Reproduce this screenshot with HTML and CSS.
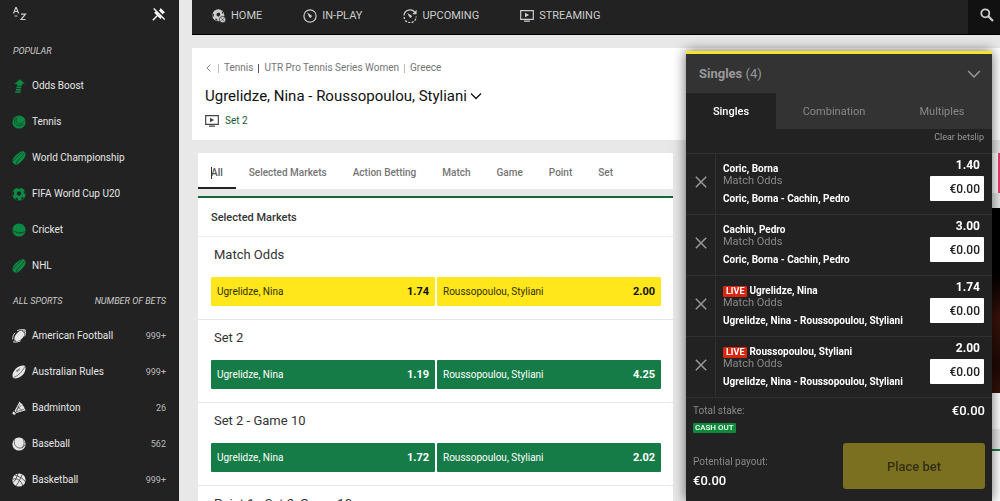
FILE: index.html
```
<!DOCTYPE html>
<html lang="en">
<head>
<meta charset="utf-8">
<title>Ugrelidze, Nina - Roussopoulou, Styliani</title>
<link rel="stylesheet" href="styles.css">
</head>
<body>
<svg class="defs" aria-hidden="true">
  <symbol id="tv" viewBox="0 0 14 14"><path d="M.7 1.7h12.6v8.6H.7z" fill="none" stroke="currentColor" stroke-width="1.2"/><path d="M5 3.8v4.4L9.2 6zM4 11.6h6v1.2H4z" fill="currentColor"/></symbol>
  <symbol id="chev" viewBox="0 0 12 12"><path d="M1 3.500 6 8.500l5-5" fill="none" stroke="currentColor" stroke-width="1.300"/></symbol>
  <symbol id="cross" viewBox="0 0 12 12"><path d="m.8.8 10.400 10.400M11.200.8.8 11.200" fill="none" stroke="currentColor" stroke-width="1.500"/></symbol>
  <symbol id="puck" viewBox="0 0 14 14"><path d="M8 1.200C9.500.3 11 0 12.200.8c1.600 1 1.700 2.400 1.200 4-.5 1.500-1.500 3-3.200 4.800-1.700 1.700-2.800 3-4.200 3.700-1.500.7-3 .5-4.200-.5C.6 11.700.3 10.300.7 9c.4-1.500 1.300-3 3-4.700C5.300 2.700 6.600 2 8 1.200z" fill="currentColor"/><path d="M12.800 1.600C11 3.500 10.500 5 8.500 6.800c-2 1.700-3.500 3.200-4.300 6.200M9.500 1.500C8 3.500 6.500 4 5 5.600c-1.300 1.400-2.500 2.700-3.500 4.400" fill="none" stroke="#222" stroke-width=".6"/></symbol>
</svg>
<div class="layout">
  <aside class="sidebar">
    <div class="tools">
      <button class="plain" aria-label="Sort A to Z"><svg class="az" viewBox="0 0 16 16"><path d="m1.500 7.500 2.300-6h.5l2.300 6M2.300 5.500h3.500M2.500 10h3M9 8.200h4.500L9 13.500h4.700" fill="none" stroke="#ccc" stroke-width="1.200"/></svg></button>
      <button class="plain" aria-label="Unpin menu"><svg class="pin" viewBox="0 0 14 14"><path d="m8.500 1 4.600 4.500-1.300.5-2.300 2.700.3 2L8.500 12 2.200 5.800l1.200-1.200 2 .2L8 2.400z" fill="#fff"/><path d="M5.200 8.800.8 13.300" stroke="#fff" stroke-width="1.300"/><path d="m2.700.8 10.500 11.400" stroke="#222" stroke-width="2.800"/><path d="m1.700 1.500 11 11" stroke="#fff" stroke-width="1.200"/></svg></button>
    </div>
    <h2 class="side-title first"><span>POPULAR</span></h2>
    <ul class="side-list green">
      <li><a href="#"><svg viewBox="0 0 14 14"><path d="M8 .3 13 5l-2.800-.3-.3 2H4.800l.4-2L2 5.200zM4.600 7.500h5l-.3 1.800H4.200zM4 10h5.200l-.2 1.500H3.700zM3.500 12.200h5.300l-.2 1.500H3z" fill="currentColor"/></svg><span>Odds Boost</span></a></li>
      <li><a href="#"><svg viewBox="0 0 14 14"><circle cx="7" cy="7" r="6.600" fill="currentColor"/><path d="M6 1.500C3.700 3.500 3.500 6.500 5.600 8.300c2.300 1.500 5 .4 7-2.600M3.500 2.500C1.800 5.500 2.300 8.500 4.500 10c2.200 1.300 5 1 7-.7" fill="none" stroke="#222" stroke-width=".6"/></svg><span>Tennis</span></a></li>
      <li><a href="#"><svg><use href="#puck"/></svg><span>World Championship</span></a></li>
      <li><a href="#"><svg viewBox="0 0 14 14"><circle cx="7" cy="7" r="6.600" fill="currentColor"/><path d="m5.500 4.700 3-.2.900 2.600-2.300 1.900-2.400-1.800zM4.500 1l2.500.9L9.500 1 8.600.3H5.500zM.5 4.500l1.600.7L2 7.900l-1.500.4zM3.700 10.700l2.200.7.3 1.900-2.500-.8zM9.500 10.400l2.200-.5-.7 2-1.700.8zM11.700 4l1.100.2.500 2.800-1.500-.8z" fill="#222"/></svg><span>FIFA World Cup U20</span></a></li>
      <li><a href="#"><svg viewBox="0 0 14 14"><circle cx="7" cy="7" r="6.600" fill="currentColor"/><path d="M.5 7.200c3.500 2.500 8 3.100 12.800 1.400" fill="none" stroke="#222" stroke-width=".6"/><path d="M.8 8.700c3.500 2 7.500 2.500 12 1.300" fill="none" stroke="#222" stroke-width=".4" stroke-dasharray="1 .8"/></svg><span>Cricket</span></a></li>
      <li><a href="#"><svg><use href="#puck"/></svg><span>NHL</span></a></li>
    </ul>
    <h2 class="side-title"><span>ALL SPORTS</span><span>NUMBER OF BETS</span></h2>
    <ul class="side-list">
      <li><a href="#"><svg viewBox="0 0 14 14"><path d="M12.600 1.400c.6 4-.8 7-3.600 9-2 1.500-4 2.200-6.500 2-.8-3.500.5-6.500 3-8.700 2-1.700 4.300-2.500 7.100-2.300z" fill="currentColor"/><path d="M3 3.800C1.300 5.500.5 8 .8 10.500M5 1.900C7.200.6 10 .3 13.200.8c.5 2.500.3 4.500-.5 6.500M1 12.900c3 .5 5.500 0 7.700-1.100" fill="none" stroke="currentColor" stroke-width=".9"/><path d="M2.500 10.500c.2.900.6 1.500 1.500 1.900M10 1.600c1.200.5 2 1.400 2.500 2.600" fill="none" stroke="#222" stroke-width=".8"/></svg><span>American Football</span><small>999+</small></a></li>
      <li><a href="#"><svg viewBox="0 0 14 14"><path d="M13 .9c1.500 3.500-.5 7.600-3.600 10.200-2.600 2-6.300 3-8.400 1.900C-.4 9.800 1.300 6 4.300 3.300 7 1 10.500 0 13 .9z" fill="currentColor"/><path d="m4.300 6.500 3.800-3M4.600 5.200l1.200 1.500M6 4.100l1.200 1.500M1.500 12.500C5 11.500 10.500 7 12.700 1.500" fill="none" stroke="#222" stroke-width=".6"/></svg><span>Australian Rules</span><small>999+</small></a></li>
      <li><a href="#"><svg viewBox="0 0 14 14"><path d="m7.500.5 1.300 1.800 1.500.8.6 2 1.200.7.300 1.800 1.400 1.700-9.400 2.600L2.500 10zM1.700 10.400l2.200 2.300c-.6 1.200-2.300 1.200-3.100.3-.8-.8-.3-2.200.9-2.600z" fill="currentColor"/><path d="m7.700 2.800-3.500 8L12 8.200M4 9.500l5.500-5.200M5.200 5.500l5 4" fill="none" stroke="#222" stroke-width=".5"/></svg><span>Badminton</span><small>26</small></a></li>
      <li><a href="#"><svg viewBox="0 0 14 14"><circle cx="7" cy="7" r="6.600" fill="currentColor"/><path d="M2.800 1.800C1.500 5.500 2.500 9.800 7 11c3 .5 5-1 6-3.500M11.200 2c1.500 3 1.200 6-1.200 8.500" fill="none" stroke="#222" stroke-width=".6"/></svg><span>Baseball</span><small>562</small></a></li>
      <li><a href="#"><svg viewBox="0 0 14 14"><circle cx="7" cy="7" r="6.600" fill="currentColor"/><path d="M.5 6.200C5 4.800 9 7 10.700 12.800M2.500 2C7 3.500 11 5 13.500 9M6 .3C5 4 3.500 8 .8 9.500M10.500 1.200C8.500 5 7 9 3.800 13.200" fill="none" stroke="#222" stroke-width=".7"/></svg><span>Basketball</span><small>999+</small></a></li>
    </ul>
  </aside>

  <div class="page">
    <nav class="topnav">
      <a href="#"><svg viewBox="0 0 14 14"><circle cx="6.300" cy="6.300" r="6" fill="currentColor"/><path d="m5 4 2.600-.2.800 2.300-2 1.600-2-1.500zM.5 4.500l1.400.6-.2 2.200-1.200.5zM3.500 9.500l1.700.7.2 1.600-2-.8zM9.800 2l1.200 1.400.4 1.500-1.400-.6z" fill="#222"/><circle cx="10.600" cy="10.600" r="3.200" fill="currentColor" stroke="#222" stroke-width=".7"/><path d="M9 12.300 12.300 9M9.200 9.200l2.800 2.800" stroke="#222" stroke-width=".5"/></svg>HOME</a>
      <a href="#"><svg viewBox="0 0 14 14"><circle cx="7" cy="7" r="6.100" fill="none" stroke="currentColor" stroke-width="1.200"/><path d="m4 3.500 4.300 2.700a1.400 1.400 0 1 1-2 2z" fill="currentColor"/></svg>IN-PLAY</a>
      <a href="#"><svg viewBox="0 0 14 14"><path d="M12.200 4A6 6 0 0 0 1 6.500" fill="none" stroke="currentColor" stroke-width="1.300"/><path d="M1.100 8a6 6 0 0 0 12-.5" fill="none" stroke="currentColor" stroke-width="1.300" stroke-dasharray="2.200 1.300"/><path d="M13.600.8v4.400H9.300zM4.200 4l4 2.300a1.300 1.300 0 1 1-1.800 1.800z" fill="currentColor"/></svg>UPCOMING</a>
      <a href="#"><svg><use href="#tv"/></svg>STREAMING</a>
      <button class="search" aria-label="Search"><svg viewBox="0 0 14 14"><circle cx="5.300" cy="5.300" r="4" fill="none" stroke="currentColor" stroke-width="1.800"/><path d="m8.300 8.300 4.700 4.700" stroke="currentColor" stroke-width="2.200"/></svg></button>
    </nav>

    <header class="event">
      <div class="crumbs">
        <a class="back" href="#" aria-label="Back"><svg viewBox="0 0 8 12"><path d="M5.500 2.500 2 6l3.500 3.500" fill="none" stroke="currentColor"/></svg></a>
        <i></i><a href="#">Tennis</a><i class="dark"></i><a href="#">UTR Pro Tennis Series Women</a><i></i><a href="#">Greece</a>
      </div>
      <h1>Ugrelidze, Nina - Roussopoulou, Styliani <svg><use href="#chev"/></svg></h1>
      <div class="status"><svg><use href="#tv"/></svg><span>Set 2</span></div>
    </header>

    <div class="columns">
      <main class="markets">
        <nav class="tabs">
          <a class="on" href="#">All</a><a href="#">Selected Markets</a><a href="#">Action Betting</a><a href="#">Match</a><a href="#">Game</a><a href="#">Point</a><a href="#">Set</a>
        </nav>
        <section class="panel">
          <h2>Selected Markets</h2>
          <div class="market">
            <h3>Match Odds</h3>
            <div class="odds picked"><button><span>Ugrelidze, Nina</span><b>1.74</b></button><button><span>Roussopoulou, Styliani</span><b>2.00</b></button></div>
          </div>
          <div class="market">
            <h3>Set 2</h3>
            <div class="odds"><button><span>Ugrelidze, Nina</span><b>1.19</b></button><button><span>Roussopoulou, Styliani</span><b>4.25</b></button></div>
          </div>
          <div class="market">
            <h3>Set 2 - Game 10</h3>
            <div class="odds"><button><span>Ugrelidze, Nina</span><b>1.72</b></button><button><span>Roussopoulou, Styliani</span><b>2.02</b></button></div>
          </div>
          <div class="market">
            <h3>Point 1 - Set 2, Game 10</h3>
          </div>
        </section>
      </main>
      <div class="extras">
        <div class="promo-tabs"></div>
        <div class="banner"></div>
        <div class="blank"></div>
        <div class="side-panel"></div>
      </div>
    </div>
  </div>
</div>

<section class="betslip">
  <header><h2>Singles <span>(4)</span></h2><button class="plain" aria-label="Collapse"><svg><use href="#chev"/></svg></button></header>
  <div class="modes"><button class="on">Singles</button><button>Combination</button><button>Multiples</button></div>
  <div class="clear"><button class="plain">Clear betslip</button></div>
  <ul class="bets">
    <li><button class="plain remove" aria-label="Remove"><svg><use href="#cross"/></svg></button><div class="bet"><strong>Coric, Borna</strong><p>Match Odds</p><strong class="match">Coric, Borna - Cachin, Pedro</strong></div><div class="stake"><b>1.40</b><input aria-label="Stake" value="€0.00"></div></li>
    <li><button class="plain remove" aria-label="Remove"><svg><use href="#cross"/></svg></button><div class="bet"><strong>Cachin, Pedro</strong><p>Match Odds</p><strong class="match">Coric, Borna - Cachin, Pedro</strong></div><div class="stake"><b>3.00</b><input aria-label="Stake" value="€0.00"></div></li>
    <li><button class="plain remove" aria-label="Remove"><svg><use href="#cross"/></svg></button><div class="bet"><strong><em>LIVE</em>Ugrelidze, Nina</strong><p>Match Odds</p><strong class="match">Ugrelidze, Nina - Roussopoulou, Styliani</strong></div><div class="stake"><b>1.74</b><input aria-label="Stake" value="€0.00"></div></li>
    <li><button class="plain remove" aria-label="Remove"><svg><use href="#cross"/></svg></button><div class="bet"><strong><em>LIVE</em>Roussopoulou, Styliani</strong><p>Match Odds</p><strong class="match">Ugrelidze, Nina - Roussopoulou, Styliani</strong></div><div class="stake"><b>2.00</b><input aria-label="Stake" value="€0.00"></div></li>
  </ul>
  <footer>
    <div class="total"><span>Total stake:</span><b>€0.00</b></div>
    <span class="cash">CASH OUT</span>
    <div class="payout"><div><span>Potential payout:</span><b>€0.00</b></div><button>Place bet</button></div>
  </footer>
</section>
</body>
</html>
```
FILE: styles.css
```
* { box-sizing: border-box; }
body { margin: 0; background: #e8e8e8; color: #222; font: 10px/14px Roboto, sans-serif; overflow: hidden; }
h1, h2, h3, p, ul { margin: 0; padding: 0; font-weight: 400; }
ul { list-style: none; }
a { color: inherit; text-decoration: none; }
button, input { font-family: inherit; border: 0; margin: 0; }
svg { display: block; flex: none; width: 14px; height: 14px; }
.defs { position: absolute; width: 0; height: 0; }
.plain { background: none; padding: 0; color: inherit; }

.layout { display: flex; height: 100vh; overflow: hidden; }
.sidebar { flex: none; width: 179px; padding: 0 13px 0 12px; background: #222; color: #e6e6e6; }
.tools { display: flex; justify-content: space-between; align-items: center; height: 28px; margin-bottom: 5px; }
.tools .az { width: 16px; height: 16px; }
.side-title { display: flex; justify-content: space-between; align-items: center; height: 34px; padding-left: 1px; font-size: 9px; font-style: italic; color: #ccc; }
.side-title.first { height: 35px; }
.side-list a { display: flex; align-items: center; gap: 6px; height: 36px; font-size: 10px; }
.side-list small { margin-left: auto; font-size: 9px; color: #bbb; }
.side-list.green svg { color: #0c8a43; }

.page { flex: 1; min-width: 0; padding-left: 13px; }
.topnav { display: flex; align-items: center; height: 35px; padding-left: 20px; gap: 41px; background: #222; border-bottom: 1px solid #000; color: #ccc; font-size: 11px; }
.topnav a { display: flex; align-items: center; gap: 5px; margin-top: -3px; }
.search { display: flex; align-items: center; align-self: stretch; width: 32px; margin-left: auto; padding: 0 0 4px 12px; background: #111; color: #ccc; }

.event { height: 92px; margin-top: 13px; padding: 13px; background: #fff; }
.crumbs { display: flex; align-items: center; gap: 5px; color: #757575; }
.crumbs i { width: 1px; height: 9px; background: #bbb; }
.crumbs .dark { background: #555; }
.crumbs .back svg { width: 8px; height: 12px; color: #888; }
.event h1 { display: flex; align-items: center; gap: 3px; margin-top: 11px; color: #111; font-size: 15px; line-height: 20px; }
.event h1 svg { width: 12px; height: 12px; }
.status { display: flex; align-items: center; gap: 6px; margin-top: 8px; color: #145c36; }
.status svg { color: #444; }

.columns { display: flex; gap: 16px; padding-left: 6px; margin-top: 13px; }
.markets { flex: none; width: 475px; }
.tabs { display: flex; height: 36px; background: #fff; color: #757575; font-weight: 500; }
.tabs a { display: flex; align-items: center; padding: 6px 13px 0; border-bottom: 2px solid transparent; }
.tabs .on { position: relative; border-color: #222; color: #555; }
.tabs .on::before { content: ""; position: absolute; left: 13px; top: 14px; width: 1px; height: 12px; background: #333; }
.panel { margin-top: 7px; background: #fff; border-top: 2px solid #14693b; }
.panel h2 { padding: 12px 13px 11px; border-bottom: 1px solid #eee; color: #333; font-size: 11px; font-weight: 500; line-height: 15px; }
.market { padding: 9px 12px 13px 13px; border-bottom: 1px solid #e6e6e6; }
.market h3 { padding: 0 3px 14px; color: #333; font-size: 13px; line-height: 17px; }
.odds { display: flex; gap: 2px; }
.odds button { display: flex; flex: 1; justify-content: space-between; align-items: center; height: 29px; padding: 0 6px; background: #167c47; border-radius: 1px; color: #fff; font-size: 10px; }
.odds b { font-size: 11px; }
.picked button { background: #ffe71c; color: #332e05; }
.picked b { color: #111; }

.extras { flex: 1; }
.promo-tabs { height: 40px; background: #fff; border-right: 2px solid #e83e70; }
.banner { height: 185px; margin-top: 15px; background: linear-gradient(#000 35%, #3a130b 60%, #1f0805 85%, #351209); }
.blank { height: 36px; background: #fff; }
.side-panel { height: 80px; margin-top: 20px; background: #fff; border-top: 2px solid #167c47; }

.betslip { position: fixed; top: 51px; right: 8px; bottom: 0; width: 306px; background: #222; border-top: 3px solid #f5e12a; box-shadow: 0 0 12px rgba(0, 0, 0, .6); }
.betslip > header { display: flex; justify-content: space-between; align-items: center; height: 39px; padding: 0 11px 0 13px; background: #333; color: #999; }
.betslip h2 { font-size: 13px; font-weight: 700; }
.betslip h2 span { font-weight: 400; }
.modes { display: flex; height: 36px; background: #333; }
.modes button { flex: 116 1 0; padding: 0; background: none; color: #888; font-size: 11px; }
.modes button:first-child { flex-grow: 90; }
.modes button:last-child { flex-grow: 100; }
.modes .on { background: #222; color: #fff; font-weight: 500; }
.clear { display: flex; justify-content: flex-end; height: 24px; padding: 0 8px 9px; color: #999; }
.clear button { font-size: 9px; }
.bets li { display: flex; height: 61px; border-top: 1px solid #303030; }
.remove { display: grid; flex: none; place-items: center; width: 30px; padding-bottom: 4px; border-right: 1px solid #303030; color: #999; }
.remove svg { width: 12px; height: 12px; }
.bet { flex: 1; padding: 9px 0 0 7px; }
.bet strong { display: flex; align-items: center; gap: 2px; color: #fff; font-size: 10px; font-weight: 700; line-height: 12px; }
.bet em { padding: 0 3px; background: #d9260f; border-radius: 1px; font-size: 9px; font-style: normal; line-height: 11px; }
.bet p { color: #888; font-size: 11px; line-height: 12px; }
.bet .match { margin-top: 6px; }
.stake { display: flex; flex-direction: column; align-items: flex-end; gap: 4px; padding: 4px 8px 0 0; color: #fff; }
.stake b { padding-right: 4px; font-size: 12px; }
.stake input { width: 54px; height: 25px; padding: 0 4px; background: #fff; border-radius: 1px; color: #222; font-size: 12px; font-weight: 500; text-align: right; }
.betslip footer { padding: 6px 7px; border-top: 1px solid #303030; color: #888; }
.total, .payout { display: flex; justify-content: space-between; }
.betslip footer b { color: #fff; font-size: 13px; font-weight: 500; }
.cash { display: inline-block; margin-top: 5px; padding: 0 2px; background: #0f8a3c; border-radius: 1px; color: #fff; font-size: 8px; font-weight: 500; line-height: 10px; }
.payout { align-items: flex-end; margin-top: 9px; }
.payout div { display: flex; flex-direction: column; gap: 5px; padding-bottom: 1px; }
.payout button { width: 142px; height: 46px; background: #7b701f; border-radius: 3px; color: #332f16; font-size: 13px; font-weight: 500; }
```
